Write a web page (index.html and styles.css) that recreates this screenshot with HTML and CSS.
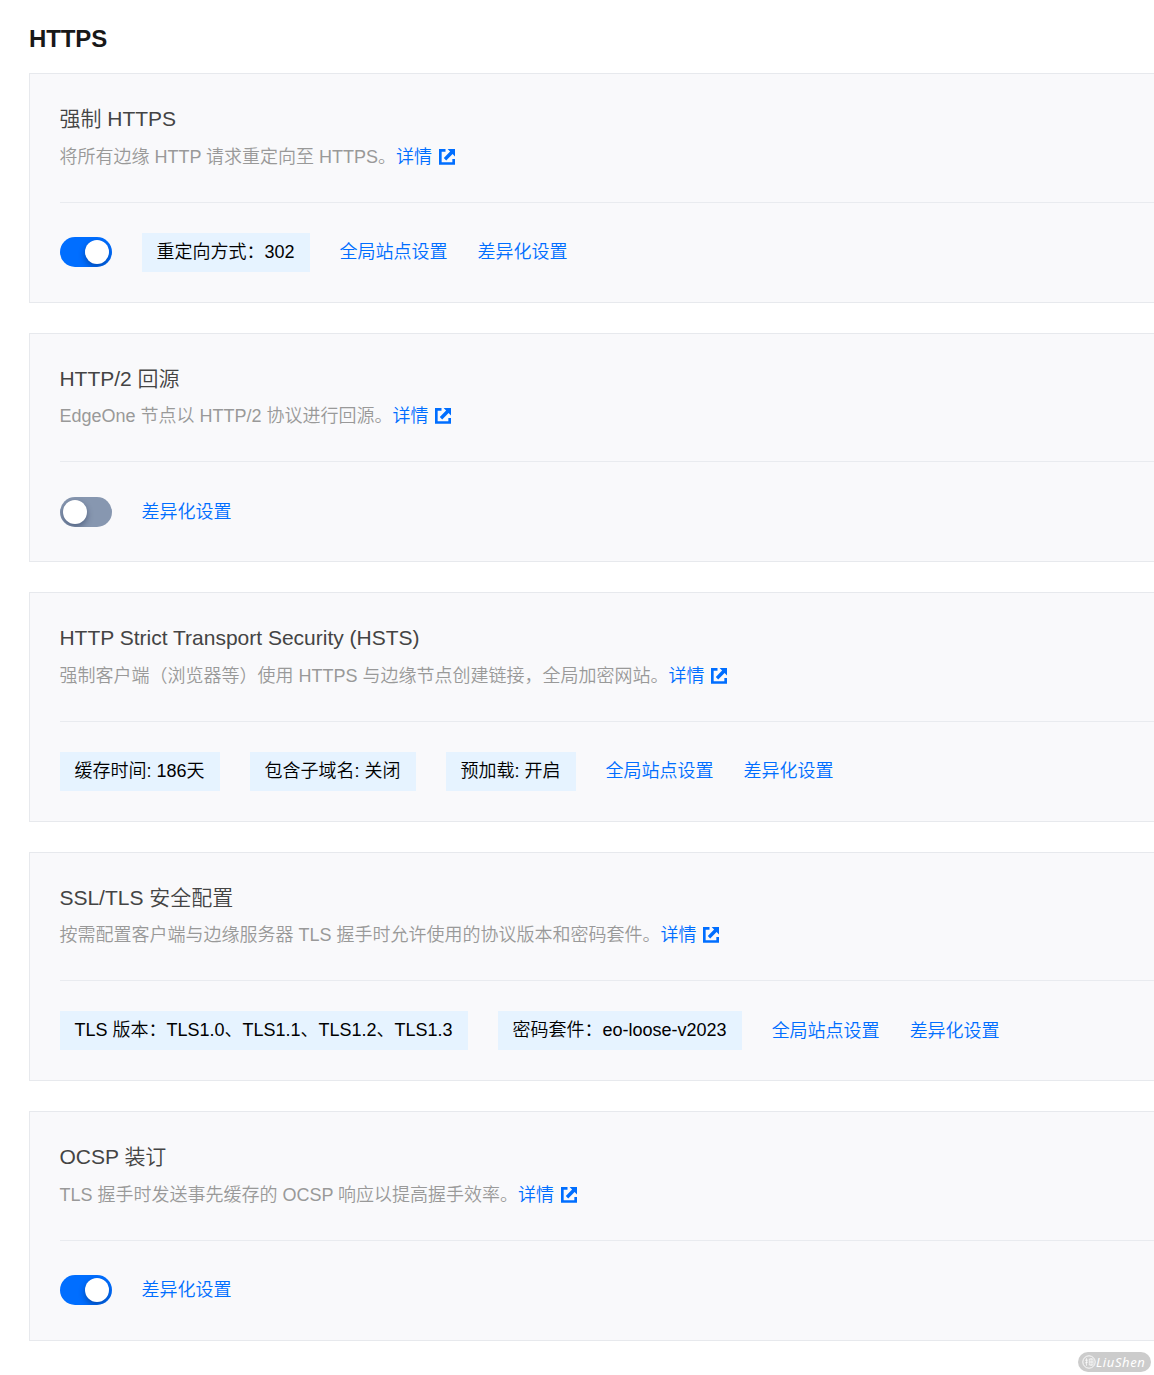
FILE: index.html
```html
<!DOCTYPE html>
<html lang="zh-CN">
<head>
<meta charset="utf-8">
<title>HTTPS</title>
<link rel="stylesheet" href="styles.css">
</head>
<body>
<svg width="0" height="0" class="sprite" aria-hidden="true">
  <symbol id="external" viewBox="0 0 16 16">
    <path d="M6.5 1.3H1.3V14.5H14.7V10" fill="none" stroke="currentColor" stroke-width="2.7"/>
    <path d="M8.6 0H16V7.4L13.6 5L7.2 11.4L4.8 9L11.1 2.5Z" fill="currentColor"/>
  </symbol>
</svg>
<main class="page">
  <h1 class="page-title">HTTPS</h1>

  <section class="card">
    <header class="card-head">
      <h2 class="card-title">强制 HTTPS</h2>
      <p class="card-desc">将所有边缘 HTTP 请求重定向至 HTTPS。<a class="link">详情<svg class="ext"><use href="#external"/></svg></a></p>
    </header>
    <div class="card-row">
      <span class="switch switch-on"></span>
      <span class="tag">重定向方式：302</span>
      <a class="link">全局站点设置</a>
      <a class="link">差异化设置</a>
    </div>
  </section>

  <section class="card">
    <header class="card-head">
      <h2 class="card-title">HTTP/2 回源</h2>
      <p class="card-desc">EdgeOne 节点以 HTTP/2 协议进行回源。<a class="link">详情<svg class="ext"><use href="#external"/></svg></a></p>
    </header>
    <div class="card-row">
      <span class="switch"></span>
      <a class="link">差异化设置</a>
    </div>
  </section>

  <section class="card">
    <header class="card-head">
      <h2 class="card-title">HTTP Strict Transport Security (HSTS)</h2>
      <p class="card-desc">强制客户端（浏览器等）使用 HTTPS 与边缘节点创建链接，全局加密网站。<a class="link">详情<svg class="ext"><use href="#external"/></svg></a></p>
    </header>
    <div class="card-row">
      <span class="tag">缓存时间: 186天</span>
      <span class="tag">包含子域名: 关闭</span>
      <span class="tag">预加载: 开启</span>
      <a class="link">全局站点设置</a>
      <a class="link">差异化设置</a>
    </div>
  </section>

  <section class="card">
    <header class="card-head">
      <h2 class="card-title">SSL/TLS 安全配置</h2>
      <p class="card-desc">按需配置客户端与边缘服务器 TLS 握手时允许使用的协议版本和密码套件。<a class="link">详情<svg class="ext"><use href="#external"/></svg></a></p>
    </header>
    <div class="card-row">
      <span class="tag">TLS 版本：TLS1.0、TLS1.1、TLS1.2、TLS1.3</span>
      <span class="tag">密码套件：eo-loose-v2023</span>
      <a class="link">全局站点设置</a>
      <a class="link">差异化设置</a>
    </div>
  </section>

  <section class="card">
    <header class="card-head">
      <h2 class="card-title">OCSP 装订</h2>
      <p class="card-desc">TLS 握手时发送事先缓存的 OCSP 响应以提高握手效率。<a class="link">详情<svg class="ext"><use href="#external"/></svg></a></p>
    </header>
    <div class="card-row">
      <span class="switch switch-on"></span>
      <a class="link">差异化设置</a>
    </div>
  </section>
</main>
<div class="watermark">
  <svg class="seal" viewBox="0 0 14 14" fill="none" stroke="currentColor">
    <circle cx="7" cy="7" r="6.2" stroke-width=".9"/>
    <path d="M3 5.2H6M4.5 3.2V10.8M3 8L6 7M7.3 4H11V10H7.3ZM7.3 7H11M9.1 3V11" stroke-width=".7"/>
  </svg>
  <span class="watermark-text">LiuShen</span>
</div>
</body>
</html>
```

FILE: styles.css
```css
* { box-sizing: border-box; }

body {
  margin: 0;
  height: 1375px;
  overflow: hidden;
  background: #fff;
  font-family: "Liberation Sans", "Noto Sans CJK SC", sans-serif;
  font-size: 18px;
  font-weight: 350;
  color: #000;
}

.sprite { position: absolute; }

.page { padding: 24px 0 0 29px; }

.page-title {
  margin: 0 0 19px;
  font-size: 24px;
  line-height: 30px;
  font-weight: 700;
  letter-spacing: -.1px;
  color: #181818;
}

.card {
  height: 229.5px;
  margin-bottom: 30px;
  padding-left: 30px;
  background: #f9f9fb;
  border: 1px solid #e7e9ed;
  border-right: 0;
}

.card-head {
  height: 128.75px;
  padding-top: 30px;
  border-bottom: 1px solid #e9ebef;
}

.card-title {
  margin: 0 0 9.5px -.6px;
  font-size: 21px;
  line-height: 30px;
  font-weight: 350;
  color: #444;
}

.card-desc {
  margin: 0 0 0 -.6px;
  line-height: 27px;
  color: #999;
  white-space: nowrap;
}

.link { color: #006eff; white-space: nowrap; }

.ext {
  width: 16px;
  height: 16px;
  margin-left: 7px;
  vertical-align: -2px;
}

.card-row {
  display: flex;
  align-items: center;
  gap: 30px;
  height: 39px;
  margin-top: 30px;
}

.card-row .link {
  height: 39px;
  margin: 0 .6px 0 -.6px;
  padding-top: .4px;
  line-height: 38px;
}

.tag {
  height: 39px;
  padding: 0 15.6px 0 14.4px;
  line-height: 38px;
  background: #e6f3ff;
  white-space: nowrap;
}

.switch {
  display: flex;
  width: 52px;
  height: 30px;
  padding: 3px;
  border-radius: 15px;
  background: #8797b0;
  overflow: hidden;
}

.switch::before {
  content: "";
  width: 24px;
  height: 24px;
  border-radius: 50%;
  background: #fff;
  box-shadow: 0 3px 6px rgba(0, 20, 60, .4);
}

.switch-on {
  justify-content: flex-end;
  background: #006eff;
}

.watermark {
  position: absolute;
  left: 1078px;
  top: 1352px;
  display: flex;
  align-items: center;
  width: 73px;
  height: 20px;
  padding-left: 4px;
  border-radius: 10px;
  background: #ccc;
  color: #fff;
}

.seal { width: 14px; height: 14px; }

.watermark-text {
  font: italic 400 13px/18px "Noto Sans", sans-serif;
  letter-spacing: .6px;
}
```
